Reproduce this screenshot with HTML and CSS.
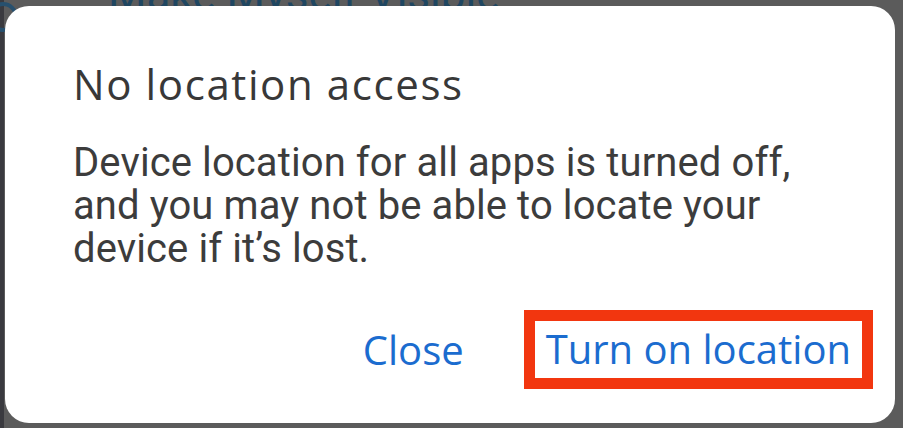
FILE: index.html
```html
<!DOCTYPE html>
<html>
<head>
<meta charset="utf-8">
<link rel="stylesheet" href="styles.css">
</head>
<body>
<div class="page">
  <div class="page-icon"></div>
  <div class="page-title">Make Myself Visible</div>
</div>
<div class="dialog">
  <h1 class="title">No location access</h1>
  <p class="message">Device location for all apps is turned off,<br>and you may not be able to locate your<br>device if it’s lost.</p>
  <div class="actions">
    <span class="btn">Close</span>
    <span class="btn highlight">Turn on location</span>
  </div>
</div>
</body>
</html>
```
FILE: styles.css
```css
html, body {
  margin: 0;
  padding: 0;
}
body {
  width: 903px;
  height: 428px;
  overflow: hidden;
  background: #5b5b5b;
  position: relative;
  font-family: Roboto, "Liberation Sans", sans-serif;
}
.page {
  display: flex;
  align-items: flex-start;
  height: 428px;
  background: linear-gradient(to right, #3a3a3f 0, #3a3a3f 4px, #5b5b5b 4px);
}
.page-icon {
  width: 22px;
  height: 22px;
  margin: 2px 0 0 -12px;
  border-radius: 50%;
  border: 4px solid #27506e;
  flex: none;
}
.page-title {
  font-family: Roboto, sans-serif;
  font-size: 44px;
  line-height: 1;
  margin: -27px 0 0 90px;
  color: #1f4661;
  white-space: nowrap;
}
.dialog {
  position: absolute;
  left: 5px;
  top: 6px;
  width: 890px;
  height: 417px;
  box-sizing: border-box;
  background: #ffffff;
  border-radius: 24px;
  padding: 54px 0 0 68px;
}
.title {
  margin: 0;
  font-family: "Open Sans", Roboto, sans-serif;
  font-weight: 400;
  font-size: 42px;
  line-height: 48px;
  letter-spacing: 1.6px;
  color: #383838;
}
.message {
  margin: 33px 0 0 0;
  font-size: 40px;
  line-height: 43px;
  letter-spacing: 0.1px;
  color: #3c3c3c;
}
.actions {
  display: flex;
  justify-content: flex-end;
  align-items: center;
  gap: 60px;
  margin-top: 40px;
  margin-right: 22px;
}
.btn {
  font-family: "Open Sans", Roboto, sans-serif;
  font-size: 40px;
  font-weight: 500;
  color: #1b6ccf;
  line-height: 48px;
}
.highlight {
  border: 11px solid #f2360f;
  padding: 4px 11px 5px 11px;
}
```
